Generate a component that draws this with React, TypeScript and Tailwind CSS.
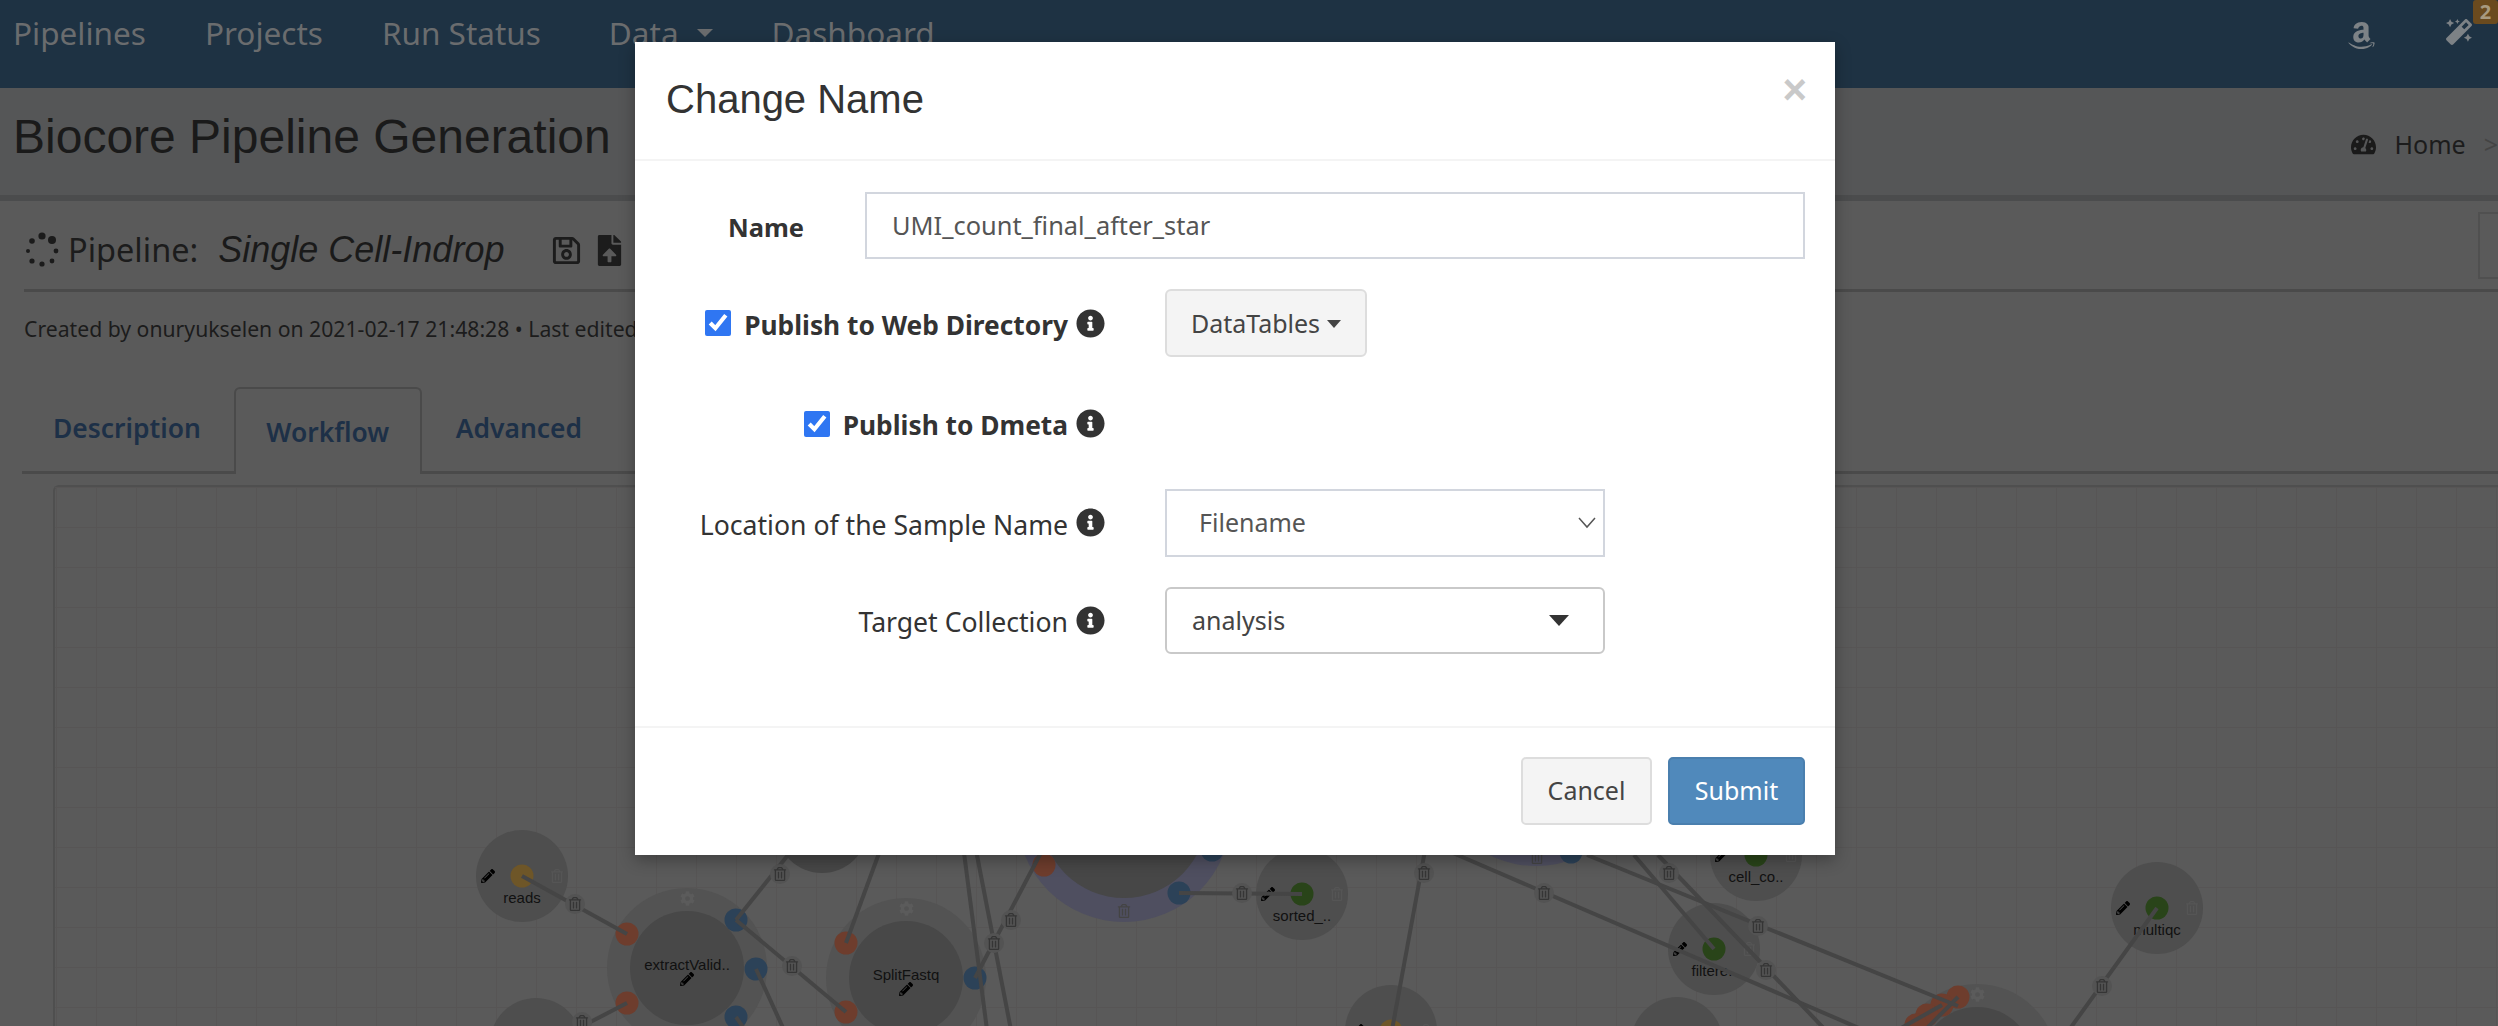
import React from "react";
import {
  FaAmazon,
  FaMagic,
  FaTachometerAlt,
  FaRegSave,
  FaFileUpload,
  FaInfoCircle,
  FaPencilAlt,
  FaRegTrashAlt,
  FaCog,
} from "react-icons/fa";

type Port = [number, number, string];

const RED = "#6e3d2d";
const BLUE = "#2c4258";
const GREEN = "#294419";
const ORANGE = "#6e5628";

// big process nodes: ring + inner circle
const processes = [
  { x: 687, y: 968, label: "extractValid.." },
  { x: 906, y: 978, label: "SplitFastq" },
  { x: 1977, y: 1064, label: "" },
];

// small in/out param nodes
const params = [
  { x: 522, y: 876, r: 46, color: ORANGE, label: "reads" },
  { x: 1302, y: 894, r: 46, color: GREEN, label: "sorted_.." },
  { x: 1714, y: 949, r: 46, color: GREEN, label: "filtere.." },
  { x: 1756, y: 855, r: 46, color: GREEN, label: "cell_co.." },
  { x: 2157, y: 908, r: 46, color: GREEN, label: "multiqc" },
  { x: 1391, y: 1031, r: 46, color: ORANGE, label: "" },
  { x: 536, y: 1044, r: 46, color: ORANGE, label: "" },
  { x: 1677, y: 1043, r: 46, color: ORANGE, label: "" },
];

const ports: Port[] = [
  [627, 934, RED],
  [627, 1003, RED],
  [736, 920, BLUE],
  [756, 969, BLUE],
  [736, 1017, BLUE],
  [846, 943, RED],
  [846, 1012, RED],
  [975, 978, BLUE],
  [1044, 865, RED],
  [1179, 893, BLUE],
  [1212, 850, BLUE],
  [1571, 852, BLUE],
  [1958, 997, RED],
  [1942, 1005, RED],
  [1927, 1015, RED],
  [1916, 1025, RED],
];

const edges = [
  [522, 876, 627, 934],
  [736, 920, 796, 845],
  [736, 920, 846, 1012],
  [756, 969, 784, 1030],
  [736, 1017, 745, 1030],
  [627, 1003, 575, 1030],
  [846, 943, 882, 845],
  [975, 978, 1045, 845],
  [963, 845, 987, 1030],
  [975, 845, 1011, 1030],
  [1179, 893, 1302, 894],
  [1426, 845, 1392, 1030],
  [1446, 850, 1875, 1035],
  [1587, 855, 1958, 1006],
  [1634, 855, 1714, 949],
  [1658, 855, 1835, 1040],
  [1880, 1040, 1942, 1005],
  [1920, 1035, 1958, 997],
  [2157, 908, 2069, 1030],
];

const edgeTrash = [
  [575, 904],
  [780, 874],
  [792, 966],
  [582, 1022],
  [1011, 920],
  [994, 943],
  [1242, 893],
  [1424, 873],
  [1544, 893],
  [1669, 873],
  [1758, 926],
  [1766, 970],
  [2102, 986],
];

const Trash = ({ x, y, color = "#353535" }: { x: number; y: number; color?: string }) => (
  <FaRegTrashAlt x={x - 7} y={y - 7} size={14} color={color} />
);

const Pencil = ({ x, y }: { x: number; y: number }) => (
  <FaPencilAlt x={x - 7} y={y - 7} size={14} color="#000000" />
);

const Workflow = () => (
  <svg viewBox="55 487 2443 539" className="block h-full w-full">
    <defs>
      <pattern id="grid" x="16" y="7" width="40" height="40" patternUnits="userSpaceOnUse">
        <path d="M40 0H0V40" fill="none" stroke="#575555" strokeWidth="2" />
      </pattern>
    </defs>
    <rect x="55" y="487" width="2443" height="539" fill="url(#grid)" />

    {/* blue rings behind the modal */}
    <circle cx="1124" cy="815" r="107" fill="#4f4f60" />
    <circle cx="1124" cy="815" r="83" fill="#474747" />
    <circle cx="1536" cy="759" r="107" fill="#4f4f60" />
    <circle cx="822" cy="827" r="46" fill="#474747" />

    {processes.map((p) => (
      <g key={p.x}>
        <circle cx={p.x} cy={p.y} r="80" fill="#535353" />
        <circle cx={p.x} cy={p.y} r="57" fill="#484848" />
        <FaCog x={p.x - 7} y={p.y - 77} size={15} color="#5b5b5b" />
        {p.label && (
          <>
            <text x={p.x} y={p.y + 2} textAnchor="middle" fontSize="15" fill="#111111" fontFamily="Liberation Sans">
              {p.label}
            </text>
            <Pencil x={p.x} y={p.y + 11} />
          </>
        )}
      </g>
    ))}

    {params.map((p) => (
      <g key={p.x}>
        <circle cx={p.x} cy={p.y} r={p.r} fill="#4e4e4e" />
        <circle cx={p.x} cy={p.y} r="11.5" fill={p.color} />
        <Pencil x={p.x - 34} y={p.y} />
        <Trash x={p.x + 35} y={p.y} color="#555555" />
        {p.label && (
          <text x={p.x} y={p.y + 27} textAnchor="middle" fontSize="15" fill="#111111" fontFamily="Liberation Sans">
            {p.label}
          </text>
        )}
      </g>
    ))}

    {ports.map(([x, y, c]) => (
      <circle key={`${x}-${y}`} cx={x} cy={y} r="11.5" fill={c} />
    ))}

    {edges.map(([x1, y1, x2, y2]) => (
      <line key={`${x1}-${y1}-${x2}`} x1={x1} y1={y1} x2={x2} y2={y2} stroke="#454545" strokeWidth="4" />
    ))}

    {edgeTrash.map(([x, y]) => (
      <g key={`${x}-${y}`}>
        <circle cx={x} cy={y} r="10" fill="#535353" />
        <Trash x={x} y={y} />
      </g>
    ))}

    <Trash x={1124} y={911} color="#444444" />
    <Trash x={1537} y={857} color="#444444" />
  </svg>
);

const Spinner = () => (
  <svg width="36" height="36" viewBox="0 0 36 36" className="shrink-0">
    <g fill="#1b1b1b">
      <circle cx="18" cy="4" r="3.6" />
      <circle cx="28" cy="8" r="4" />
      <circle cx="32" cy="19" r="2.4" />
      <circle cx="28" cy="29" r="2.4" />
      <circle cx="18" cy="32" r="2.6" />
      <circle cx="8" cy="29" r="2.6" />
      <circle cx="4" cy="19" r="2" />
      <circle cx="8" cy="9" r="2.8" />
    </g>
  </svg>
);

const Info = () => <FaInfoCircle size={29} color="#333333" className="shrink-0" />;

const Caret = ({ className }: { className: string }) => (
  <span className={`inline-block h-0 w-0 border-x-transparent border-solid ${className}`} />
);

const App: React.FC = () => {
  return (
    <div className="relative flex h-[1026px] w-[2498px] flex-col overflow-hidden bg-[#5a5a5a] font-['Noto_Sans',sans-serif]">
      {/* navbar */}
      <nav className="flex h-[88px] shrink-0 items-start bg-[#1e3243] pl-[13px] pt-[11px] pr-0 text-[31.5px] leading-[44px] text-[#6a6c6e]">
        <div className="flex gap-[59px]">
          <span>Pipelines</span>
          <span>Projects</span>
          <span className="pr-[9px]">Run Status</span>
          <span className="flex items-center gap-[18px]">
            Data
            <Caret className="border-x-[8px] border-t-[8px] border-t-[#6a6c6e]" />
          </span>
          <span>Dashboard</span>
        </div>
        <div className="ml-auto flex items-start">
          <FaAmazon size={31} color="#7d8286" className="mt-[9px]" />
          <FaMagic size={26} color="#7d8286" className="ml-[69px] mt-[8px]" />
          <span className="-mt-[11px] ml-[1px] flex h-[24px] w-[25px] items-center justify-center rounded-[3px] bg-[#6a4a1e] text-[20px] font-bold leading-none text-[#a89a80]">
            2
          </span>
        </div>
      </nav>

      {/* page header */}
      <header className="flex h-[113px] shrink-0 items-center border-b-[6px] border-[#4b4c4d] bg-[#555657] pb-[10px] pl-[13px]">
        <h1 className="font-['Liberation_Sans',sans-serif] text-[48px] leading-none text-[#1a1a1a]">
          Biocore Pipeline Generation
        </h1>
        <div className="ml-auto flex translate-y-[8px] items-center text-[25px] text-[#1c1c1c]">
          <FaTachometerAlt size={25} color="#1a1a1a" />
          <span className="ml-[19px]">Home</span>
          <span className="ml-[18px] text-[#444444]">&gt;</span>
        </div>
      </header>

      {/* pipeline title */}
      <div className="ml-[24px] flex h-[91px] shrink-0 items-center border-b-[3px] border-[#4a4a4a] pt-[10px]">
        <Spinner />
        <span className="ml-[8px] text-[32.5px] text-[#1c1c1c]">Pipeline:</span>
        <span className="ml-[20px] font-['Liberation_Sans',sans-serif] text-[36px] italic text-[#1a1a1a]">
          Single Cell-Indrop
        </span>
        <FaRegSave size={31} color="#1c1c1c" className="ml-[47px]" />
        <FaFileUpload size={31} color="#1c1c1c" className="ml-[12px]" />
        <div className="ml-auto h-[67px] w-[20px] -translate-y-[5px] border-2 border-r-0 border-[#505050]" />
      </div>

      <p className="flex h-[95px] shrink-0 items-center pb-[21px] pl-[24px] text-[21.2px] text-[#1c1c1c]">
        Created by onuryukselen on 2021-02-17 21:48:28 • Last edited
      </p>

      {/* tabs */}
      <div className="ml-[22px] flex h-[87px] shrink-0 items-end border-b-[3px] border-[#4a4a4a] text-[26.4px] font-semibold text-[#1d3047]">
        <span className="mb-[22px] ml-[31px] mr-[33px]">Description</span>
        <span className="-mb-[3px] flex h-[87px] w-[188px] items-center justify-center rounded-t-[6px] border-2 border-b-0 border-[#4a4a4a] bg-[#5a5a5a] pt-[2px]">
          Workflow
        </span>
        <span className="mb-[22px] ml-[34px]">Advanced</span>
      </div>

      {/* canvas */}
      <div className="ml-[53px] mt-[11px] min-h-0 flex-1 rounded-tl-[6px] border-l-2 border-t-2 border-[#4f4f4f]">
        <Workflow />
      </div>

      {/* modal */}
      <div className="absolute left-[635px] top-[42px] w-[1200px] bg-white shadow-[0_5px_15px_rgba(0,0,0,0.3)]">
        <div className="flex h-[119px] items-start justify-between border-b-2 border-[#f4f4f4] pl-[31px] pr-[28px]">
          <h4 className="mt-[33px] font-['Liberation_Sans',sans-serif] text-[40px] leading-[48px] text-[#333333]">
            Change Name
          </h4>
          <span className="mt-[24px] font-['Liberation_Sans',sans-serif] text-[42px] font-bold leading-[48px] text-[#c9c9c9]">
            ×
          </span>
        </div>

        <div className="flex flex-col gap-[30px] pb-[72px] pl-[30px] pr-[30px] pt-[31px] text-[25px] text-[#333333]">
          <div className="flex h-[67px] items-center">
            <label className="w-[200px] pr-[61px] pt-[3px] text-right text-[25.5px] font-bold">Name</label>
            <input
              readOnly
              value="UMI_count_final_after_star"
              className="h-[67px] flex-1 border-2 border-[#d2d6de] pb-[2px] pl-[25px] text-[25.4px] text-[#555555] outline-none"
            />
          </div>

          <div className="flex h-[68px] items-center">
            <div className="flex w-[440px] items-center justify-end">
              <input type="checkbox" defaultChecked className="h-[26px] w-[26px] accent-[#2f76f2]" />
              <span className="ml-[13px] pt-[6px] text-[26.3px] font-bold">Publish to Web Directory</span>
              <span className="ml-[8px]">
                <Info />
              </span>
            </div>
            <button className="ml-[60px] flex h-[68px] w-[202px] items-center justify-center gap-[7px] rounded-[6px] border-2 border-[#dddddd] bg-[#f4f4f4] pt-[2px] text-[#444444]">
              DataTables
              <Caret className="border-x-[7px] border-t-[8px] border-t-[#444444]" />
            </button>
          </div>

          <div className="flex h-[72px] items-center">
            <div className="flex w-[440px] items-center justify-end">
              <input type="checkbox" defaultChecked className="mt-[2px] h-[26px] w-[26px] accent-[#2f76f2]" />
              <span className="ml-[13px] pt-[6px] text-[26.3px] font-bold">Publish to Dmeta</span>
              <span className="ml-[8px]">
                <Info />
              </span>
            </div>
          </div>

          <div className="flex h-[68px] items-center">
            <div className="flex w-[440px] items-center justify-end">
              <span className="pt-[5px] text-[26.6px]">Location of the Sample Name</span>
              <span className="ml-[8px]">
                <Info />
              </span>
            </div>
            <div className="ml-[60px] flex h-[68px] w-[440px] items-center justify-between border-2 border-[#d2d6de] pl-[32px] pr-[6px] text-[#555555]">
              Filename
              <svg width="20" height="12" viewBox="0 0 20 12" fill="none" stroke="#555555" strokeWidth="1.5">
                <path d="M2 1l8 9 8-9" />
              </svg>
            </div>
          </div>

          <div className="flex h-[67px] items-center">
            <div className="flex w-[440px] items-center justify-end">
              <span className="pt-[5px] text-[26.6px]">Target Collection</span>
              <span className="ml-[8px]">
                <Info />
              </span>
            </div>
            <div className="ml-[60px] flex h-[67px] w-[440px] items-center justify-between rounded-[6px] border-2 border-[#c9c9c9] pl-[25px] pr-[34px] text-[#444444]">
              analysis
              <Caret className="border-x-[10px] border-t-[11px] border-t-[#333333]" />
            </div>
          </div>
        </div>

        <div className="flex h-[129px] items-start justify-end gap-[16px] border-t-2 border-[#f4f4f4] pr-[30px] pt-[29px] text-[25px]">
          <button className="h-[68px] w-[131px] rounded-[5px] border-2 border-[#dddddd] bg-[#f4f4f4] text-[#444444]">
            Cancel
          </button>
          <button className="h-[68px] w-[137px] rounded-[5px] border-2 border-[#4a7fae] bg-[#5089bb] text-white">
            Submit
          </button>
        </div>
      </div>
    </div>
  );
};

export default App;
